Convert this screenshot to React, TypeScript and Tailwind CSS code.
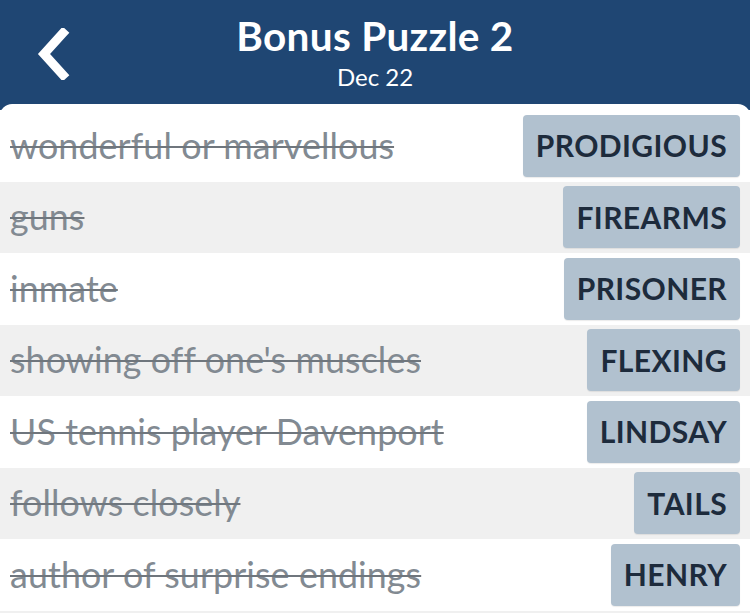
import React from "react";

const rows = [
  { clue: "wonderful or marvellous", answer: "PRODIGIOUS" },
  { clue: "guns", answer: "FIREARMS" },
  { clue: "inmate", answer: "PRISONER" },
  { clue: "showing off one's muscles", answer: "FLEXING" },
  { clue: "US tennis player Davenport", answer: "LINDSAY" },
  { clue: "follows closely", answer: "TAILS" },
  { clue: "author of surprise endings", answer: "HENRY" },
];

export default function App() {
  return (
    <div
      className="w-[750px] h-[613px] overflow-hidden bg-[#1f4673]"
      style={{ fontFamily: "Lato, 'Noto Sans', sans-serif" }}
    >
      {/* Header */}
      <header className="relative h-[104px] flex flex-col items-center text-white">
        <button className="absolute left-[30px] top-[24px] w-[46px] h-[60px] flex items-center justify-center">
          <svg width="36" height="52" viewBox="0 0 36 52">
            <path d="M28 5 L9 26 L28 47" fill="none" stroke="white" strokeWidth="9" strokeLinecap="square" strokeLinejoin="miter" />
          </svg>
        </button>
        <h1 className="mt-[12px] text-[40.5px] leading-[47px] font-bold tracking-[0.3px]">Bonus Puzzle 2</h1>
        <p className="text-[24px] leading-[28px] mt-[4px]">Dec 22</p>
      </header>

      {/* Clue list */}
      <main className="bg-white rounded-t-[12px] pt-[6px] h-[509px]">
        {rows.map((r, i) => (
          <div
            key={i}
            className={`h-[71.5px] flex items-center justify-between pl-[10px] pr-[10px] ${i % 2 === 1 ? "bg-[#f0f0f0]" : "bg-white"}`}
          >
            <span className="text-[35.8px] text-[#828a92] line-through decoration-[1.5px] decoration-[#6f767d] tracking-[0.1px]">
              {r.clue}
            </span>
            <span className="h-[62px] flex items-center px-[13px] rounded-[4px] bg-[#b1c1cf] text-[#1d2b3c] text-[30px] font-bold tracking-[0.4px] shadow-[0_1px_1px_rgba(0,0,0,0.08)]">
              {r.answer}
            </span>
          </div>
        ))}
        <div className="h-[10px] bg-[#f0f0f0]" />
      </main>
    </div>
  );
}
